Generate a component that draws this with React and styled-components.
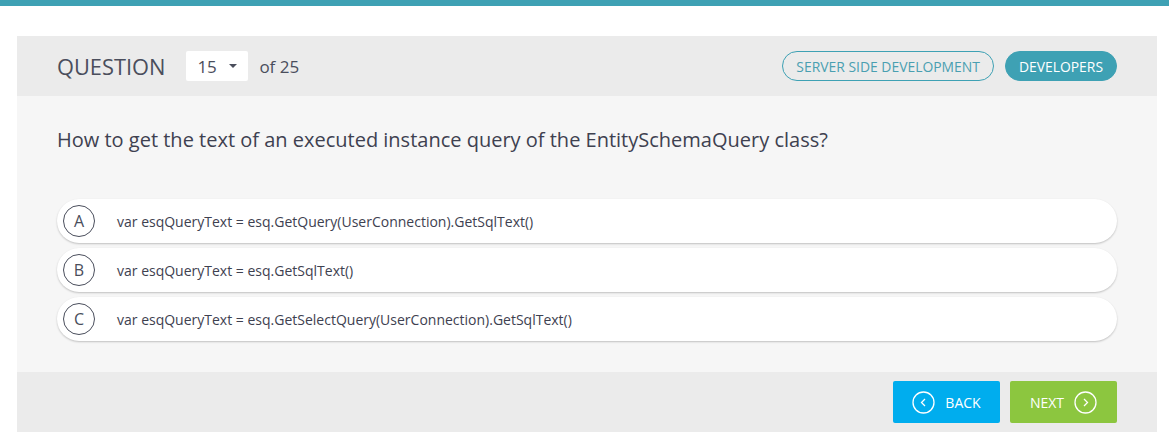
import React from 'react'
import styled, { createGlobalStyle } from 'styled-components'

const GlobalStyle = createGlobalStyle`
    body {
        margin: 0;
        background: #fff;
        font-family: "Open Sans", "Liberation Sans", sans-serif;
    }
`

const TopBar = styled.div`
    height: 6px;
    background-color: #3ea1b4;
`

const Card = styled.div`
    margin: 30px 12px 0 17px;
    width: 1140px;
`

const Header = styled.div`
    height: 60px;
    background-color: #ebebeb;
    display: flex;
    align-items: center;
    padding: 0 40px;
    box-sizing: border-box;
`

const Title = styled.span`
    font-size: 21.8px;
    color: #4a4e5c;
`

const Select = styled.div`
    margin-left: 21px;
    width: 62px;
    height: 30px;
    background: #fff;
    border-radius: 2px;
    display: flex;
    align-items: center;
    padding: 0 11px;
    box-sizing: border-box;
    font-size: 17px;
    color: #4a4e5c;
    justify-content: space-between;
`

const Caret = styled.span`
    width: 0;
    height: 0;
    border-left: 4px solid transparent;
    border-right: 4px solid transparent;
    border-top: 4px solid #4a4e5c;
`

const OfText = styled.span`
    margin-left: 11px;
    font-size: 17px;
    color: #4a4e5c;
`

const Tags = styled.div`
    margin-left: auto;
    display: flex;
    gap: 11px;
`

const Tag = styled.span`
    height: 30px;
    box-sizing: border-box;
    border-radius: 15px;
    border: 1px solid #3ea1b4;
    padding: 0 13px;
    display: flex;
    align-items: center;
    font-size: 13.9px;
    color: ${props => props.filled ? '#fff' : '#4a9fb1'};
    background-color: ${props => props.filled ? '#3ea1b4' : 'transparent'};
`

const Body = styled.div`
    background-color: #f6f6f6;
    height: 276px;
    padding: 30px 40px 0;
    box-sizing: border-box;
`

const Question = styled.div`
    font-size: 20px;
    color: #3e4150;
    line-height: 28px;
`

const Options = styled.div`
    margin-top: 45px;
    display: flex;
    flex-direction: column;
    gap: 5px;
`

const Option = styled.div`
    height: 44px;
    background: #fff;
    border-radius: 22px;
    box-shadow: 0 1px 2px rgba(0, 0, 0, 0.22);
    display: flex;
    align-items: center;
    padding-left: 6px;
    cursor: pointer;
`

const Letter = styled.span`
    width: 30px;
    height: 30px;
    border: 1px solid #4a4e5c;
    border-radius: 50%;
    display: flex;
    align-items: center;
    justify-content: center;
    font-size: 16px;
    color: #4a4e5c;
`

const OptionText = styled.span`
    margin-left: 22px;
    font-size: 14px;
    color: #3e4150;
`

const Footer = styled.div`
    height: 60px;
    background-color: #ebebeb;
    display: flex;
    justify-content: flex-end;
    align-items: center;
    gap: 10px;
    padding-right: 40px;
`

const NavButton = styled.button`
    width: 107px;
    height: 42px;
    border: none;
    border-radius: 2px;
    background-color: ${props => props.color};
    color: #fff;
    font-family: inherit;
    font-size: 14px;
    display: flex;
    align-items: center;
    justify-content: center;
    gap: 10px;
    cursor: pointer;
`

const Chevron = ({ dir }) => (
    <svg width="23" height="23" viewBox="0 0 23 23" fill="none" stroke="#fff" strokeWidth="1.3">
        <circle cx="11.5" cy="11.5" r="10.5" />
        {dir === 'left'
            ? <path d="M13 8 L9.5 11.5 L13 15" />
            : <path d="M10 8 L13.5 11.5 L10 15" />}
    </svg>
)

const options = [
    { letter: 'A', text: 'var esqQueryText = esq.GetQuery(UserConnection).GetSqlText()' },
    { letter: 'B', text: 'var esqQueryText = esq.GetSqlText()' },
    { letter: 'C', text: 'var esqQueryText = esq.GetSelectQuery(UserConnection).GetSqlText()' },
]

const App = () => {
    return (
        <>
            <GlobalStyle />
            <TopBar />
            <Card>
                <Header>
                    <Title>QUESTION</Title>
                    <Select>15 <Caret /></Select>
                    <OfText>of 25</OfText>
                    <Tags>
                        <Tag>SERVER SIDE DEVELOPMENT</Tag>
                        <Tag filled>DEVELOPERS</Tag>
                    </Tags>
                </Header>
                <Body>
                    <Question>How to get the text of an executed instance query of the EntitySchemaQuery class?</Question>
                    <Options>
                        {options.map(o => (
                            <Option key={o.letter}>
                                <Letter>{o.letter}</Letter>
                                <OptionText>{o.text}</OptionText>
                            </Option>
                        ))}
                    </Options>
                </Body>
                <Footer>
                    <NavButton color="#00adee"><Chevron dir="left" /> BACK</NavButton>
                    <NavButton color="#8cc63f">NEXT <Chevron dir="right" /></NavButton>
                </Footer>
            </Card>
        </>
    )
}

export default App
